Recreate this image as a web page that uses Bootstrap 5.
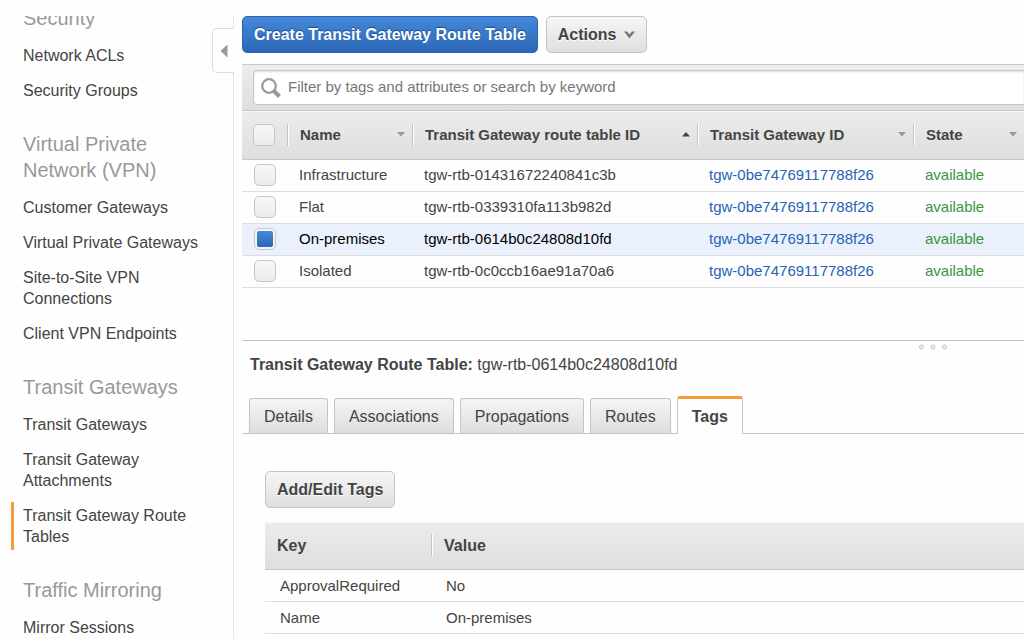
<!DOCTYPE html>
<html lang="en">
<head>
<meta charset="utf-8">
<meta name="viewport" content="width=device-width, initial-scale=1">
<title>Transit Gateway Route Tables</title>
<link href="https://cdn.jsdelivr.net/npm/bootstrap@5.3.0/dist/css/bootstrap.min.css" rel="stylesheet">
<style>
  body { font-family: "Liberation Sans", Arial, sans-serif; font-size: 15px; color: #444; background: #fefefe; }

  /* Sidebar */
  .side { width: 234px; border-right: 1px solid #e6e6e6; }
  .side-scroll { overflow: hidden; padding-left: 11px; }
  .side-scroll > :first-child { margin-top: -11px; }
  .side h2 { font-size: 20px; line-height: 26px; color: #999; font-weight: 400; margin: 30px 40px 14px 12px; }
  .side .nav { gap: 14px; }
  .side .nav-link { padding: 0 20px 0 12px; font-size: 16px; line-height: 21px; color: #444; }
  .side .nav-link.active { margin: -3px 0; padding: 3px 20px 3px 9px; border-left: 3px solid #f79b34; }
  .collapse-tab { top: 12px; right: -1px; width: 22px; height: 45px; padding: 0 0 0 7px; border: 1px solid #ddd; border-right: 0; border-radius: 5px 0 0 5px; background: #fefefe; }

  /* Buttons */
  .btn-con { height: 37px; padding: 0 11px; font-size: 16px; font-weight: 700; line-height: 36px; border: 1px solid #c4c4c4; border-radius: 5px; color: #444; background: linear-gradient(#f6f6f6, #dfdfdf); text-shadow: 0 1px 0 #fff; }
  .btn-con:hover { color: #444; border-color: #aaa; }
  .btn-con.blue { color: #fff; border-color: #2a61b2; background: linear-gradient(#4588d9, #2c67b7); text-shadow: 0 -1px 1px #1c4a8c; }

  /* Filter bar */
  .filter-bar { margin-top: 11px; height: 47px; padding: 5px 0 5px 11px; background: linear-gradient(#ededed, #dedede); border-top: 1px solid #c8c8c8; border-bottom: 1px solid #c8c8c8; }
  .filter-box { height: 35px; padding-left: 7px; background: #fff; border: 1px solid #c6c6c6; border-right: 0; border-radius: 4px 0 0 4px; box-shadow: inset 0 1px 2px #ddd; }
  .filter-box input { border: 0; outline: 0; background: none; font-size: 15px; color: #444; padding: 0 7px; }
  .filter-box input::placeholder { color: #777; opacity: 1; }

  /* Tables */
  .grid { table-layout: fixed; width: 100%; }
  .grid th { height: 48px; padding: 0; color: #444; }
  .grid thead { background: linear-gradient(#ececec, #dedede); box-shadow: inset 0 1px #f6f6f6; }
  .grid thead tr { border-bottom: 1px solid #c8c8c8; }
  .grid tbody tr { height: 32px; border-bottom: 1px solid #ddd; }
  .grid td { padding: 0 0 0 12px; line-height: 18px; }
  .grid td a { color: #2563b8; text-decoration: none; }
  .grid .chosen { background: #eaf1fc; color: #000; }
  .head-cell { height: 22px; border-left: 1px solid #c3c3c3; box-shadow: inset 1px 0 #fff; padding: 0 7px 0 12px; }
  .col-check { width: 45px; } .col-name { width: 125px; } .col-rtb { width: 285px; } .col-tgw { width: 216px; }
  .ok { color: #39963f; }
  .tick { display: block; appearance: none; width: 22px; height: 22px; margin: 0; border: 1px solid #c6c6c6; border-radius: 5px; background: linear-gradient(#f7f7f7, #ebebeb); }
  th .tick { margin-left: 11px; }
  .tick:checked { padding: 2px; background: linear-gradient(#4588d9, #2c67b7) content-box, #f5f5f5; }

  /* Detail pane */
  .detail { margin-top: 52px; border-top: 1px solid #c4c4c4; }
  .grip { top: 3px; right: 76px; }
  .detail h1 { font-size: 16px; line-height: 24px; margin: 0; padding: 12px 0 0 8px; font-weight: 400; }
  .tabs { margin-top: 19px; padding-left: 7px; gap: 6px; border-bottom: 1px solid #c4c4c4; }
  .tabs .nav-link { height: 35px; padding: 0 14px; font-size: 16px; line-height: 35px; color: #444; border: 1px solid #c4c4c4; border-bottom: 0; border-radius: 3px 3px 0 0; background: linear-gradient(#f5f5f5, #dedede); }
  .tabs .nav-link.active { height: 38px; margin-bottom: -1px; font-weight: 700; background: #fefefe; border-top: 3px solid #f79b34; padding: 0 14px; }
  .pane { padding: 37px 0 0 23px; }
  .pane .grid { margin-top: 14px; }
  .pane .grid th { font-size: 16px; }
  .pane .grid td { padding-left: 15px; }
  .pane .head-cell { padding: 2px 0 0 12px; }
  .pane .head-cell.first { border: 0; box-shadow: none; }
  .col-key { width: 166px; }
</style>
</head>
<body>
<div class="d-flex min-vh-100 pt-3">
  <nav class="side position-relative flex-shrink-0" aria-label="VPC">
    <div class="side-scroll">
      <h2>Security</h2>
      <div class="nav flex-column">
        <a class="nav-link" href="#">Network ACLs</a>
        <a class="nav-link" href="#">Security Groups</a>
      </div>
      <h2>Virtual Private Network (VPN)</h2>
      <div class="nav flex-column">
        <a class="nav-link" href="#">Customer Gateways</a>
        <a class="nav-link" href="#">Virtual Private Gateways</a>
        <a class="nav-link" href="#">Site-to-Site VPN<br>Connections</a>
        <a class="nav-link" href="#">Client VPN Endpoints</a>
      </div>
      <h2 class="text-nowrap">Transit Gateways</h2>
      <div class="nav flex-column">
        <a class="nav-link" href="#">Transit Gateways</a>
        <a class="nav-link" href="#">Transit Gateway<br>Attachments</a>
        <a class="nav-link active" href="#" aria-current="page">Transit Gateway Route Tables</a>
      </div>
      <h2 class="text-nowrap">Traffic Mirroring</h2>
      <div class="nav flex-column">
        <a class="nav-link" href="#">Mirror Sessions</a>
      </div>
    </div>
    <button type="button" class="collapse-tab position-absolute d-flex align-items-center" aria-label="Collapse navigation">
      <svg width="8" height="14" viewBox="0 0 8 14"><path d="M7.500 .5v13L.5 7z" fill="#999"/></svg>
    </button>
  </nav>

  <main class="flex-grow-1 ms-2 overflow-hidden">
    <div class="d-flex gap-2">
      <button type="button" class="btn btn-con blue">Create Transit Gateway Route Table</button>
      <button type="button" class="btn btn-con d-flex align-items-center">Actions
        <svg class="ms-2" width="11" height="8" viewBox="0 0 11 8"><path d="M0 .5h3l2.500 2.700L8 .5h3L5.500 7.500z" fill="#777"/></svg>
      </button>
    </div>

    <div class="filter-bar">
      <label class="filter-box d-flex align-items-center">
        <svg width="20" height="20" viewBox="0 0 20 20" fill="none" stroke="#999"><circle cx="8" cy="8" r="6.800" stroke-width="2.300"/><path d="M13 13l5.500 5.500" stroke-width="4"/></svg>
        <input class="flex-grow-1" type="text" placeholder="Filter by tags and attributes or search by keyword" aria-label="Filter">
      </label>
    </div>

    <table class="grid">
      <colgroup><col class="col-check"><col class="col-name"><col class="col-rtb"><col class="col-tgw"><col></colgroup>
      <thead>
        <tr>
          <th><input type="checkbox" class="tick" aria-label="Select all"></th>
          <th><div class="head-cell d-flex align-items-center justify-content-between">Name <svg width="8" height="5" viewBox="0 0 8 5"><path d="M0 0h8L4 4.500z" fill="#999"/></svg></div></th>
          <th><div class="head-cell d-flex align-items-center justify-content-between">Transit Gateway route table ID <svg width="8" height="5" viewBox="0 0 8 5"><path d="M0 4.500h8L4 0z" fill="#444"/></svg></div></th>
          <th><div class="head-cell d-flex align-items-center justify-content-between">Transit Gateway ID <svg width="8" height="5" viewBox="0 0 8 5"><path d="M0 0h8L4 4.500z" fill="#999"/></svg></div></th>
          <th><div class="head-cell d-flex align-items-center justify-content-between">State <svg width="8" height="5" viewBox="0 0 8 5"><path d="M0 0h8L4 4.500z" fill="#999"/></svg></div></th>
        </tr>
      </thead>
      <tbody>
        <tr><td><input type="checkbox" class="tick" aria-label="Infrastructure"></td><td>Infrastructure</td><td>tgw-rtb-01431672240841c3b</td><td><a href="#">tgw-0be74769117788f26</a></td><td class="ok">available</td></tr>
        <tr><td><input type="checkbox" class="tick" aria-label="Flat"></td><td>Flat</td><td>tgw-rtb-0339310fa113b982d</td><td><a href="#">tgw-0be74769117788f26</a></td><td class="ok">available</td></tr>
        <tr class="chosen"><td><input type="checkbox" class="tick" aria-label="On-premises" checked></td><td>On-premises</td><td>tgw-rtb-0614b0c24808d10fd</td><td><a href="#">tgw-0be74769117788f26</a></td><td class="ok">available</td></tr>
        <tr><td><input type="checkbox" class="tick" aria-label="Isolated"></td><td>Isolated</td><td>tgw-rtb-0c0ccb16ae91a70a6</td><td><a href="#">tgw-0be74769117788f26</a></td><td class="ok">available</td></tr>
      </tbody>
    </table>

    <section class="detail position-relative">
      <svg class="grip position-absolute" width="30" height="6" viewBox="0 0 30 6" fill="#eee" stroke="#c4c4c4"><circle cx="3.500" cy="3" r="2"/><circle cx="15" cy="3" r="2"/><circle cx="26.500" cy="3" r="2"/></svg>
      <h1><b>Transit Gateway Route Table:</b> tgw-rtb-0614b0c24808d10fd</h1>
      <div class="nav tabs align-items-end" role="tablist">
        <button type="button" class="nav-link" role="tab">Details</button>
        <button type="button" class="nav-link" role="tab">Associations</button>
        <button type="button" class="nav-link" role="tab">Propagations</button>
        <button type="button" class="nav-link" role="tab">Routes</button>
        <button type="button" class="nav-link active" role="tab" aria-selected="true">Tags</button>
      </div>
      <div class="pane">
        <button type="button" class="btn btn-con">Add/Edit Tags</button>
        <table class="grid">
          <colgroup><col class="col-key"><col></colgroup>
          <thead><tr><th><div class="head-cell first d-flex align-items-center">Key</div></th><th><div class="head-cell d-flex align-items-center">Value</div></th></tr></thead>
          <tbody>
            <tr><td>ApprovalRequired</td><td>No</td></tr>
            <tr><td>Name</td><td>On-premises</td></tr>
          </tbody>
        </table>
      </div>
    </section>
  </main>
</div>
<script src="https://cdn.jsdelivr.net/npm/bootstrap@5.3.0/dist/js/bootstrap.bundle.min.js"></script>
</body>
</html>
